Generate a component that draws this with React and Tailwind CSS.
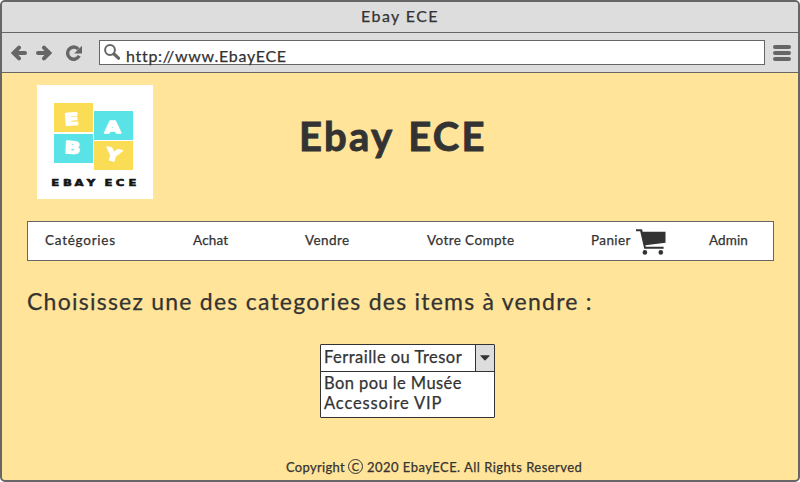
const logoTiles = [
  { letter: 'E', x: 17, y: 18, fill: '#fbdc55', tx: 35, ty: 40, rotate: -4 },
  { letter: 'B', x: 17, y: 49, fill: '#5ae3e6', tx: 35, ty: 68.5, rotate: 3 },
  { letter: 'A', x: 57, y: 26, fill: '#5ae3e6', tx: 75.5, ty: 48, rotate: 0 },
  { letter: 'Y', x: 57, y: 56, fill: '#fbdc55', tx: 75, ty: 75.5, rotate: 14 },
];

const wordmark = [
  { letter: 'E', x: 18.3 },
  { letter: 'B', x: 30.5 },
  { letter: 'A', x: 42 },
  { letter: 'Y', x: 54 },
  { letter: 'E', x: 71.5 },
  { letter: 'C', x: 83 },
  { letter: 'E', x: 95.5 },
];

function Logo() {
  return (
    <svg className="h-[114px] w-[116px] bg-white" viewBox="0 0 116 114" fontFamily="'DejaVu Sans', sans-serif" fontWeight="700" textAnchor="middle" strokeLinejoin="round">
      {logoTiles.map((t) => (
        <g key={t.letter}>
          <rect x={t.x} y={t.y} width="39" height="29" fill={t.fill} />
          <text fontSize="16.5" fill="#fff" stroke="#fff" strokeWidth="1.5" transform={`translate(${t.tx} ${t.ty}) rotate(${t.rotate}) scale(1.25 1)`}>
            {t.letter}
          </text>
        </g>
      ))}
      {wordmark.map((w) => (
        <text key={w.x} fontSize="9" fill="#151515" stroke="#151515" strokeWidth="0.6" transform={`translate(${w.x} 100.5) scale(1.3 1)`}>
          {w.letter}
        </text>
      ))}
    </svg>
  );
}

function Arrow({ className = '' }) {
  return (
    <svg className={`h-4 w-4 ${className}`} viewBox="0 0 16 16" fill="none" stroke="#666" strokeWidth="4" strokeLinecap="round" strokeLinejoin="miter">
      <path d="M3 8H14M8 2.6 2.6 8 8 13.4" />
    </svg>
  );
}

function Cart() {
  return (
    <svg className="ml-[5px] mt-px h-[26px] w-[30px]" viewBox="0 0 30 26" fill="#333">
      <path d="M0 .3h5.1c.7 0 1 .4 1.2 1l.4 1.4H29.5v11.1L9.4 16.2l.3 1.6H27.6v2H8.2L4.2 2.3H0z" />
      <circle cx="8.9" cy="23.4" r="2.3" />
      <circle cx="24.8" cy="23.4" r="2.3" />
    </svg>
  );
}

export default function App() {
  return (
    <div className="h-[482px] w-[800px] bg-white font-['Lato','Open_Sans',sans-serif] text-[#333] [-webkit-text-stroke:0.25px_#333]">
      <div className="flex h-full w-full flex-col overflow-hidden rounded-[5px] border-2 border-[#666] bg-[#ffe499]">
        <header className="flex h-[31px] shrink-0 items-center justify-center border-b border-[#666] bg-[#ddd]">
          <span className="-mt-[2px] text-[16px] leading-none tracking-[1.4px]">Ebay ECE</span>
        </header>
        <div className="flex h-10 shrink-0 items-center border-b border-[#666] bg-[#ddd] pl-[9px]">
          <Arrow />
          <Arrow className="ml-[9px] rotate-180" />
          <svg className="ml-[13px] h-4 w-[18px]" viewBox="0 0 18 16" fill="none" stroke="#666" strokeWidth="3.4">
            <path d="M13.3 4.1A6.1 6.1 0 1 0 14.2 10.8" />
            <path d="M17 .8v7.7H9.2z" fill="#666" stroke="none" />
          </svg>
          <div className="ml-4 flex h-[25px] w-[666px] border border-[#666] bg-white pl-1">
            <svg className="mt-[3px] h-4 w-4" viewBox="0 0 16 16" fill="none" stroke="#666">
              <circle cx="6" cy="6" r="4.9" strokeWidth="2" />
              <path d="m10 10 4.5 4.2" strokeWidth="3.2" strokeLinecap="round" />
            </svg>
            <span className="ml-[6px] mt-[6px] text-[16px] leading-[18px] tracking-[0.7px]">http://www.EbayECE</span>
          </div>
          <div className="ml-[8px] flex w-[18px] flex-col gap-[2px]">
            <i className="h-1 rounded-full bg-[#666]" />
            <i className="h-1 rounded-full bg-[#666]" />
            <i className="h-1 rounded-full bg-[#666]" />
          </div>
        </div>
        <main className="flex grow flex-col pl-[25px] pr-6 pt-3">
          <div className="flex h-[114px] pl-[10px]">
            <Logo />
            <h1 className="ml-[146px] mt-[27px] text-[40px] font-bold leading-[48px] tracking-[2.2px] [word-spacing:3px] [-webkit-text-stroke:0.9px_#333]">Ebay ECE</h1>
          </div>
          <nav className="mt-[22px] flex h-10 w-[747px] shrink-0 items-center border border-[#666] bg-white pl-[17px] text-[13.5px] leading-none">
            <a className="w-[148px] tracking-[0.75px]">Catégories</a>
            <a className="w-[112px] tracking-[0.2px]">Achat</a>
            <a className="w-[122px] tracking-[0.4px]">Vendre</a>
            <a className="w-[164px] tracking-[0.4px]">Votre Compte</a>
            <a className="flex w-[118px] items-center tracking-[0.4px]">
              <span className="w-[40px]">Panier</span>
              <Cart />
            </a>
            <a className="tracking-[0.1px]">Admin</a>
          </nav>
          <h2 className="mt-[26px] whitespace-nowrap text-[23px] leading-7 tracking-[1.24px]">Choisissez une des categories des items à vendre :</h2>
          <div className="ml-[293px] mt-[29px] h-[74px] w-[175px] shrink-0 rounded-[1px] border border-[#333] bg-white text-[16.5px]">
            <div className="flex h-[27px] border-b border-[#333]">
              <span className="grow whitespace-nowrap pl-[3px] leading-[25px] tracking-[0.47px]">Ferraille ou Tresor</span>
              <span className="flex w-[19px] shrink-0 items-center justify-center border-l border-[#333] bg-[#ddd]">
                <svg className="h-[6px] w-[10px]" viewBox="0 0 10 6" fill="#333"><path d="M.7.3h8.6q.6.1.2.6L5.5 5.2q-.5.5-1 0L.5.9Q.1.4.7.3z" /></svg>
              </span>
            </div>
            <ul className="pl-[3px] pt-px leading-5">
              <li className="tracking-[0.42px]">Bon pou le Musée</li>
              <li className="tracking-[0.85px]">Accessoire VIP</li>
            </ul>
          </div>
          <footer className="ml-[259px] mt-[41px] flex whitespace-nowrap text-[13px] leading-4 tracking-[0.3px]">
            <span>Copyright</span>
            <span className="ml-[3px] mr-[4px] flex h-[15px] w-[15px] items-center justify-center rounded-full border border-[#333] text-[11px] leading-none tracking-normal">C</span>
            <span className="tracking-[0.47px]">2020 EbayECE. All Rights Reserved</span>
          </footer>
        </main>
      </div>
    </div>
  );
}
